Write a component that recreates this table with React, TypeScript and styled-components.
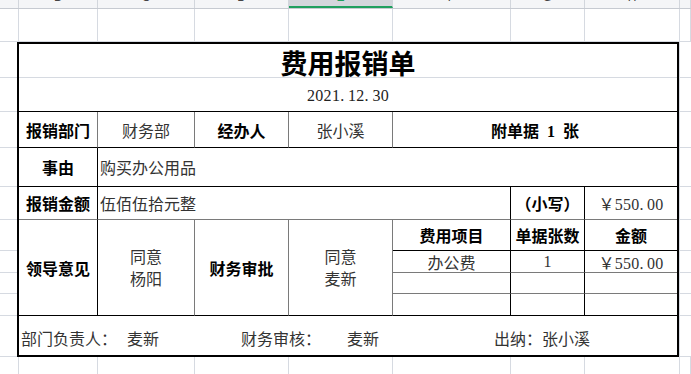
import styled, { createGlobalStyle } from "styled-components";

const GRID = "#d6dae1";
const DARK = "#000";
const GREY = "#7a7a7a";

const GlobalStyle = createGlobalStyle`
  body {
    margin: 0;
    background: #fff;
    font-family: "Liberation Serif", "Noto Sans CJK SC", serif;
  }
`;

const Sheet = styled.div`
  width: 691px;
  height: 374px;
  overflow: hidden;
  background: #fff;
`;

const ColHeaderBar = styled.div`
  display: flex;
  height: 9px;
  overflow: hidden;
  background: #f4f5f7;
  border-bottom: 1px solid #c6cad1;
  box-sizing: border-box;
`;

const ColHead = styled.div<{ $w: number; $selected?: boolean }>`
  flex: none;
  width: ${(p) => p.$w}px;
  height: 8px;
  box-sizing: border-box;
  overflow: hidden;
  border-right: 1px solid #d2d6dc;
  background: ${(p) => (p.$selected ? "#d3d6dc" : "transparent")};
  border-bottom: ${(p) => (p.$selected ? "2px solid #1f9f5e" : "none")};
`;

// the header row is scrolled up, only the foot of each letter shows
const Letter = styled.div<{ $selected?: boolean }>`
  height: 22px;
  margin-top: -14px;
  line-height: 22px;
  text-align: center;
  font-family: "Liberation Sans", Arial, sans-serif;
  font-size: 12px;
  color: ${(p) => (p.$selected ? "#1f9f5e" : "#444")};
`;

const GridRow = styled.div<{ $h: number }>`
  display: flex;
  height: ${(p) => p.$h}px;
`;

const GridCell = styled.div<{ $w: number; $bottom?: boolean }>`
  flex: none;
  width: ${(p) => p.$w}px;
  height: 100%;
  box-sizing: border-box;
  border-right: 1px solid ${GRID};
  border-bottom: ${(p) => (p.$bottom ? `1px solid ${GRID}` : "none")};
`;

const Middle = styled.div`
  display: flex;
`;

const Margin = styled.div<{ $w: number; $left?: boolean }>`
  flex: none;
  width: ${(p) => p.$w}px;
  display: flex;
  flex-direction: column;
  border-left: ${(p) => (p.$left ? `1px solid ${GRID}` : "none")};
  box-sizing: border-box;
`;

const MarginCell = styled.div<{ $h: number }>`
  height: ${(p) => p.$h}px;
  box-sizing: border-box;
  border-bottom: 1px solid ${GRID};
`;

const Form = styled.div`
  flex: none;
  width: 662px;
  box-sizing: border-box;
  border: 2px solid ${DARK};
  display: grid;
  grid-template-columns: 79px 97px 94px 104px 118px 74px 92px;
  grid-template-rows: 34px 34px 36px 39px 33px 31px 22px 21px 22px 39px;
  color: #222;
  font-size: 16px;
`;

const Cell = styled.div<{
  $span?: number;
  $rows?: number;
  $r?: string;
  $b?: string;
  $left?: boolean;
  $bold?: boolean;
}>`
  grid-column: span ${(p) => p.$span ?? 1};
  grid-row: span ${(p) => p.$rows ?? 1};
  box-sizing: border-box;
  display: flex;
  align-items: center;
  justify-content: ${(p) => (p.$left ? "flex-start" : "center")};
  padding-left: ${(p) => (p.$left ? "2px" : "0")};
  border-right: ${(p) => (p.$r ? `1px solid ${p.$r}` : "none")};
  border-bottom: ${(p) => (p.$b ? `1px solid ${p.$b}` : "none")};
  font-weight: ${(p) => (p.$bold ? 700 : 400)};
  color: ${(p) => (p.$bold ? "#000" : "#333")};
  white-space: pre;
  overflow: hidden;
`;

const Title = styled(Cell)`
  font-size: 27px;
  font-weight: 700;
  color: #000;
  padding-top: 4px;
`;

const DateText = styled(Cell)`
  font-size: 16px;
  letter-spacing: 0.3px;
  color: #222;
  padding-top: 2px;
`;

const Money = styled.span`
  letter-spacing: 0.2px;
`;

const Stack = styled.div`
  line-height: 22px;
  text-align: center;
  padding-top: 3px;
`;

const Footer = styled(Cell)`
  padding-left: 2px;
  padding-top: 4px;
`;

const FooterItem = styled.span<{ $ml?: number }>`
  margin-left: ${(p) => p.$ml ?? 0}px;
`;

const COLS = [19, 79, 97, 94, 104, 118, 74, 95, 11];
const LETTERS = ["", "B", "C", "D", "E", "F", "G", "H", ""];
const ROWS = [36, 34, 36, 39, 33, 31, 22, 21, 22, 41];
const THIN = "\u2009";

export default function App() {
  return (
    <Sheet>
      <GlobalStyle />
      <ColHeaderBar>
        {COLS.map((w, i) => (
          <ColHead key={i} $w={w} $selected={i === 4}>
            <Letter $selected={i === 4}>{LETTERS[i]}</Letter>
          </ColHead>
        ))}
      </ColHeaderBar>
      <GridRow $h={33}>
        {COLS.map((w, i) => (
          <GridCell key={i} $w={w} $bottom />
        ))}
      </GridRow>
      <Middle>
        <Margin $w={17}>
          {ROWS.map((h, i) => (
            <MarginCell key={i} $h={h} />
          ))}
        </Margin>
        <Form>
          <Title $span={7} $b={GRID}>费用报销单</Title>
          <DateText $span={7} $b={DARK}>{`2021.${THIN}12.${THIN}30`}</DateText>

          <Cell $bold $r={GREY} $b={DARK}>报销部门</Cell>
          <Cell $r={GREY} $b={DARK}>财务部</Cell>
          <Cell $bold $r={GREY} $b={DARK}>经办人</Cell>
          <Cell $r={GREY} $b={DARK}>张小溪</Cell>
          <Cell $span={3} $bold $b={DARK}>附单据  1  张</Cell>

          <Cell $bold $r={DARK} $b={DARK}>事由</Cell>
          <Cell $span={6} $left $b={DARK}>购买办公用品</Cell>

          <Cell $bold $r={DARK} $b={GREY}>报销金额</Cell>
          <Cell $span={4} $left $r={DARK} $b={GREY}>伍佰伍拾元整</Cell>
          <Cell $bold $r={DARK} $b={GREY}>（小写）</Cell>
          <Cell $b={GREY}>
            <Money>{`￥550.${THIN}00`}</Money>
          </Cell>

          <Cell $rows={4} $bold $r={DARK} $b={DARK}>领导意见</Cell>
          <Cell $rows={4} $r={GREY} $b={DARK}>
            <Stack>同意{"\n"}杨阳</Stack>
          </Cell>
          <Cell $rows={4} $bold $r={GREY} $b={DARK}>财务审批</Cell>
          <Cell $rows={4} $r={GREY} $b={DARK}>
            <Stack>同意{"\n"}麦新</Stack>
          </Cell>
          <Cell $bold $r={DARK} $b={DARK}>费用项目</Cell>
          <Cell $bold $r={DARK} $b={DARK}>单据张数</Cell>
          <Cell $bold $b={DARK}>金额</Cell>

          <Cell $r={DARK} $b={GREY}>办公费</Cell>
          <Cell $r={DARK} $b={GREY}>1</Cell>
          <Cell $b={GREY}>
            <Money>{`￥550.${THIN}00`}</Money>
          </Cell>

          <Cell $r={DARK} $b={GREY} />
          <Cell $r={DARK} $b={GREY} />
          <Cell $b={GREY} />

          <Cell $r={DARK} $b={DARK} />
          <Cell $r={DARK} $b={DARK} />
          <Cell $b={DARK} />

          <Footer $span={7} $left>
            <FooterItem>部门负责人：</FooterItem>
            <FooterItem $ml={10}>麦新</FooterItem>
            <FooterItem $ml={82}>财务审核：</FooterItem>
            <FooterItem $ml={26}>麦新</FooterItem>
            <FooterItem $ml={115}>出纳：张小溪</FooterItem>
          </Footer>
        </Form>
        <Margin $w={12} $left>
          {ROWS.map((h, i) => (
            <MarginCell key={i} $h={h} />
          ))}
        </Margin>
      </Middle>
      <GridRow $h={20}>
        {COLS.map((w, i) => (
          <GridCell key={i} $w={w} />
        ))}
      </GridRow>
    </Sheet>
  );
}
